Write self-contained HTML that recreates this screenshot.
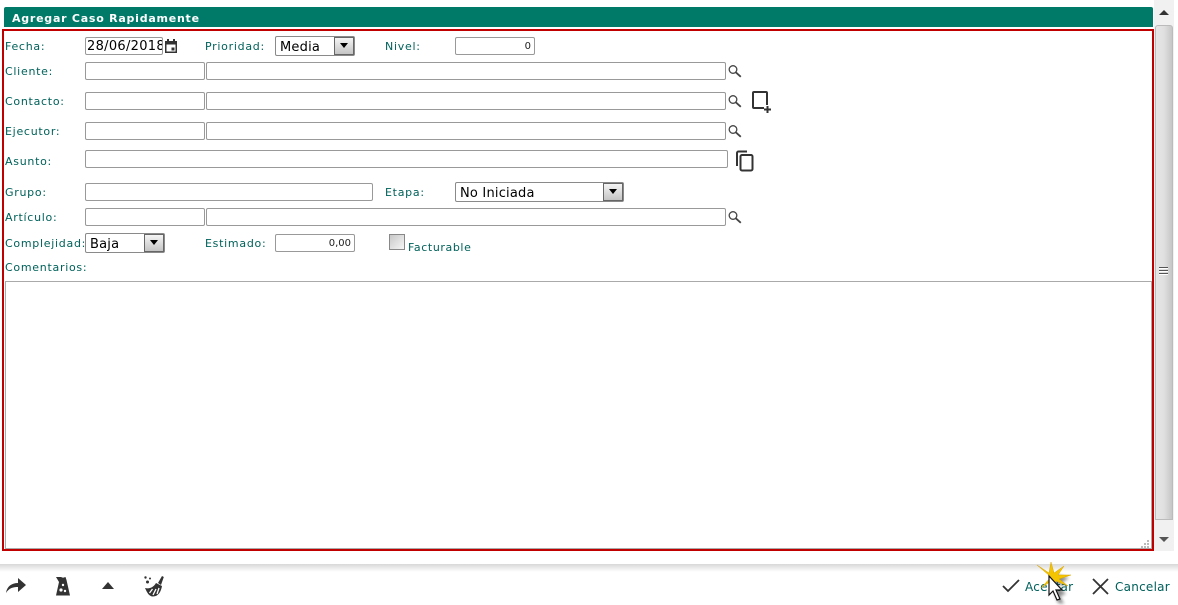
<!DOCTYPE html>
<html><head><meta charset="utf-8"><style>
html,body{margin:0;padding:0;background:#fff;width:1178px;height:605px;overflow:hidden}
body{position:relative;font-family:"DejaVu Sans","Liberation Sans",sans-serif}
.a{position:absolute}
.l{position:absolute;font-size:11px;line-height:14px;color:#00615a;white-space:nowrap;left:5px;letter-spacing:.72px;margin-top:1px}
.i{position:absolute;box-sizing:border-box;border:1px solid #999;border-radius:2px;background:#fff;height:18px}
.s{position:absolute;box-sizing:border-box;border:1px solid #8a8a8a;border-radius:2px;background:#fff;height:20px;font-size:13px;line-height:21px;color:#000;padding-left:4px;letter-spacing:.2px}
.s b{position:absolute;right:0;top:0;width:20px;height:18px;box-sizing:border-box;border:1px solid #666;background:linear-gradient(#f4f4f4,#c4c4c4)}
.s b:after{content:"";position:absolute;left:5px;top:5px;border:4px solid transparent;border-top:5px solid #000;border-bottom:0}
svg{position:absolute;overflow:visible}
</style></head><body>
<div class="a" style="left:4px;top:7px;width:1149px;height:20px;background:#007a68;border-radius:2px 2px 0 0"></div>
<div class="a" style="left:12px;top:12px;font-size:11px;line-height:14px;font-weight:bold;color:#fff;letter-spacing:.76px">Agregar Caso Rapidamente</div>
<div class="a" style="left:2px;top:29px;width:1152px;height:522px;box-sizing:border-box;border:2px solid #c00000"></div>

<div class="a" style="left:1154px;top:0;width:20px;height:551px;background:#f1f1f1"></div>
<div class="a" style="left:1155px;top:25px;width:18px;height:495px;box-sizing:border-box;border:1px solid #bbb;border-radius:3px 3px 0 0;background:linear-gradient(90deg,#e6e6e6,#e0e0e0 50%,#c6c6c6)"></div>
<div class="a" style="left:1159px;top:10px;border:5px solid transparent;border-bottom:5px solid #333;border-top:0"></div>
<div class="a" style="left:1159px;top:537px;border:5px solid transparent;border-top:5px solid #555;border-bottom:0"></div>
<div class="a" style="left:1159px;top:267px;width:9px;height:1px;background:#555;box-shadow:0 3px 0 #555,0 6px 0 #555,0 1px 0 #fff,0 4px 0 #fff,0 7px 0 #fff"></div>

<div class="l" style="top:39px">Fecha:</div>
<div class="i" style="left:85px;top:37px;width:78px;font-size:13px;line-height:18px;padding-left:1px;overflow:hidden;color:#000;white-space:nowrap;letter-spacing:.3px">28/06/2018</div>
<svg style="left:164px;top:39px" width="14" height="14" viewBox="0 0 14 14"><path fill="#333" fill-rule="evenodd" d="M1 2h2V0h2v2h4V0h2v2h2v12H1zM2.500 5.500v7h9v-7z"/><path fill="#333" d="M7.500 8.500h3v3h-3z"/></svg>
<div class="l" style="left:205px;top:39px">Prioridad:</div>
<div class="s" style="left:275px;top:36px;width:80px">Media<b></b></div>
<div class="l" style="left:385px;top:39px">Nivel:</div>
<div class="i" style="left:455px;top:37px;width:80px;font-size:10px;line-height:18px;text-align:right;padding-right:3px;color:#222">0</div>

<div class="l" style="top:64px">Cliente:</div>
<div class="i" style="left:85px;top:62px;width:120px"></div>
<div class="i" style="left:206px;top:62px;width:520px"></div>
<svg style="left:727px;top:64px" width="15" height="15" viewBox="0 0 15 15"><circle cx="6" cy="5.500" r="3.800" fill="none" stroke="#444" stroke-width="1.300"/><path d="M8.800 8.300l5 4.500" stroke="#444" stroke-width="1.800"/></svg>

<div class="l" style="top:94px">Contacto:</div>
<div class="i" style="left:85px;top:92px;width:120px"></div>
<div class="i" style="left:206px;top:92px;width:520px"></div>
<svg style="left:727px;top:94px" width="15" height="15" viewBox="0 0 15 15"><circle cx="6" cy="5.500" r="3.800" fill="none" stroke="#444" stroke-width="1.300"/><path d="M8.800 8.300l5 4.500" stroke="#444" stroke-width="1.800"/></svg>
<svg style="left:751px;top:90px" width="21" height="22" viewBox="0 0 21 22"><path fill="none" stroke="#333" stroke-width="2" d="M16 15V3a1 1 0 0 0-1-1H3a1 1 0 0 0-1 1v14a1 1 0 0 0 1 1h10"/><path stroke="#333" stroke-width="2" d="M13 19.500h7M16.500 16v7"/></svg>

<div class="l" style="top:124px">Ejecutor:</div>
<div class="i" style="left:85px;top:122px;width:120px"></div>
<div class="i" style="left:206px;top:122px;width:520px"></div>
<svg style="left:727px;top:124px" width="15" height="15" viewBox="0 0 15 15"><circle cx="6" cy="5.500" r="3.800" fill="none" stroke="#444" stroke-width="1.300"/><path d="M8.800 8.300l5 4.500" stroke="#444" stroke-width="1.800"/></svg>

<div class="l" style="top:154px">Asunto:</div>
<div class="i" style="left:85px;top:150px;width:643px"></div>
<svg style="left:736px;top:150px" width="18" height="22" viewBox="0 0 18 22"><path fill="none" stroke="#333" stroke-width="2" d="M1 16V3a1.500 1.500 0 0 1 1.500-1.500H11"/><rect x="4.500" y="5" width="12" height="15.500" rx="1.500" fill="none" stroke="#333" stroke-width="2"/></svg>

<div class="l" style="top:185px">Grupo:</div>
<div class="i" style="left:85px;top:183px;width:288px"></div>
<div class="l" style="left:385px;top:185px">Etapa:</div>
<div class="s" style="left:455px;top:182px;width:169px">No Iniciada<b></b></div>

<div class="l" style="top:210px">Artículo:</div>
<div class="i" style="left:85px;top:208px;width:120px"></div>
<div class="i" style="left:206px;top:208px;width:520px"></div>
<svg style="left:727px;top:210px" width="15" height="15" viewBox="0 0 15 15"><circle cx="6" cy="5.500" r="3.800" fill="none" stroke="#444" stroke-width="1.300"/><path d="M8.800 8.300l5 4.500" stroke="#444" stroke-width="1.800"/></svg>

<div class="l" style="top:236px">Complejidad:</div>
<div class="s" style="left:85px;top:233px;width:80px">Baja<b></b></div>
<div class="l" style="left:205px;top:236px">Estimado:</div>
<div class="i" style="left:275px;top:234px;width:80px;font-size:10px;line-height:18px;text-align:right;padding-right:3px;color:#222">0,00</div>
<div class="a" style="left:389px;top:234px;width:16px;height:16px;box-sizing:border-box;border:1px solid #888;background:linear-gradient(135deg,#c8c8c8,#f6f6f6)"></div>
<div class="l" style="left:408px;top:240px;letter-spacing:.6px">Facturable</div>
<div class="l" style="top:260px">Comentarios:</div>

<div class="i" style="left:5px;top:281px;width:1147px;height:268px;border-radius:0;border-color:#aaa"></div>
<svg style="left:1141px;top:540px" width="9" height="8"><path fill="#bbb" d="M6 0h2v2H6zM3 3h2v2H3zM6 3h2v2H6zM0 6h2v2H0zM3 6h2v2H3zM6 6h2v2H6z"/></svg>

<div class="a" style="left:0;top:564px;width:1178px;height:8px;background:linear-gradient(#d8d8d8,#fff)"></div>

<svg style="left:6px;top:578px" width="20" height="16" viewBox="0 0 20 16"><path fill="#333" d="M0 15C1 8 6 5 12 5V0l8 7-8 7V9C7 9 3 10 0 15z"/></svg>
<svg style="left:56px;top:577px" width="14" height="19" viewBox="0 0 14 19"><path fill="#333" d="M0 0h5l2 .8L9.500 0l1 3L14 18.500H0L3 5z"/><circle cx="7" cy="8" r="1.200" fill="#fff"/><circle cx="5" cy="13" r="1.600" fill="#fff"/><circle cx="9" cy="14" r="1.200" fill="#fff"/></svg>
<svg style="left:102px;top:582px" width="12" height="8" viewBox="0 0 12 8"><path fill="#333" d="M6 0l6 7H0z"/></svg>
<svg style="left:144px;top:576px" width="21" height="21" viewBox="0 0 21 21"><circle cx="1.500" cy="1.500" r="1.200" fill="#333"/><circle cx="6" cy="2.500" r="1" fill="#333"/><circle cx="3.500" cy="6" r="1.500" fill="#333"/><path fill="#333" d="M14 7l4-7 1.800 1-2.800 8z"/><path fill="#333" d="M1 12c4 1 8 0 11-5l6 3c-1 6-4 10.500-9 10.500-4 0-6-4-8-8.500z"/><path stroke="#fff" stroke-width="1.300" d="M9 19l3-6M5.500 17l3-4M13 18l2-6"/></svg>

<svg style="left:1002px;top:579px" width="18" height="14" viewBox="0 0 18 14"><path fill="none" stroke="#333" stroke-width="1.800" d="M1 7l5 5L17 1"/></svg>
<div class="a" style="left:1025px;top:580px;font-size:12px;line-height:15px;color:#00605c;white-space:nowrap;letter-spacing:.25px">Aceptar</div>
<svg style="left:1036px;top:562px" width="36" height="44" viewBox="0 0 36 44"><defs><filter id="b" x="-50%" y="-50%" width="200%" height="200%"><feGaussianBlur stdDeviation="1.500"/></filter></defs><path fill="#000" opacity=".45" filter="url(#b)" d="M19 12l14 4-8 5 6 3-12-2zM17 20l13 12-6 2 4 8-6-1-3-9z"/><path fill="#f5c400" stroke="#d9a400" stroke-width=".5" d="M15 15L1 3l12 8 2-11 3 11 10-7-6 9 13 0-12 4 9 7-12-5-3 10-2-10-10 7z"/><path fill="#fff" stroke="#111" stroke-width="1.200" d="M13 14v19l4-4 4 9 3-1-4-9h6z"/></svg>
<svg style="left:1092px;top:579px" width="18" height="16" viewBox="0 0 18 16"><path fill="none" stroke="#333" stroke-width="1.800" d="M1 0l15 15M16 0L1 15"/></svg>
<div class="a" style="left:1115px;top:580px;font-size:12px;line-height:15px;color:#00605c;white-space:nowrap;letter-spacing:.25px">Cancelar</div>
</body></html>
